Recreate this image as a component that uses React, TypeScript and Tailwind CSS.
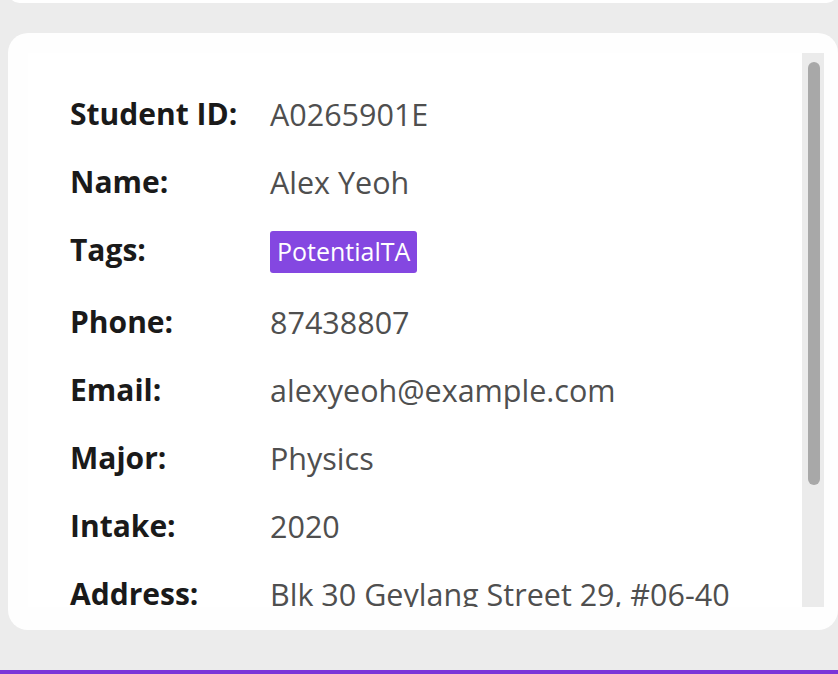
import React from 'react'

const rows: { label: string; value?: string; tag?: string }[] = [
    { label: 'Student ID:', value: 'A0265901E' },
    { label: 'Name:', value: 'Alex Yeoh' },
    { label: 'Tags:', tag: 'PotentialTA' },
    { label: 'Phone:', value: '87438807' },
    { label: 'Email:', value: 'alexyeoh@example.com' },
    { label: 'Major:', value: 'Physics' },
    { label: 'Intake:', value: '2020' },
    { label: 'Address:', value: 'Blk 30 Geylang Street 29, #06-40' },
]

const App = () => {
    return (
        <div className="h-[674px] bg-[#ececec] overflow-hidden flex flex-col font-['Open_Sans',sans-serif]">
            {/* Previous card peeking at top */}
            <div className="h-[23px] -mt-[20px] ml-2 bg-white rounded-[20px] shrink-0"></div>

            {/* Detail card */}
            <div className="mt-[30px] ml-2 w-[830px] h-[597px] bg-[#fefefe] rounded-[20px] pt-5 pl-5 pr-[14px] pb-[23px] flex shrink-0">
                <div className="flex-1 bg-white overflow-hidden pt-[42px] pl-[42px] flex flex-col gap-[30px]">
                    {rows.map((row) => (
                        <div key={row.label} className="flex items-start">
                            <div className="w-[200px] shrink-0 text-[30px] leading-[38px] font-bold text-[#1a1a1a]">
                                {row.label}
                            </div>
                            {row.tag ? (
                                <span className="h-[42px] px-[7px] flex items-center rounded-[3px] bg-[#8447e1] text-white text-[25px]">
                                    {row.tag}
                                </span>
                            ) : (
                                <div className="text-[30.5px] leading-[38px] text-[#4f4f4f] whitespace-nowrap">
                                    {row.value}
                                </div>
                            )}
                        </div>
                    ))}
                </div>

                {/* Scrollbar */}
                <div className="w-[22px] bg-[#ebebeb] shrink-0 pt-[9px] pl-[6px]">
                    <div className="w-[12px] h-[423px] rounded-full bg-[#a8a8a8]"></div>
                </div>
            </div>

            <div className="flex-1"></div>
            <div className="h-1 bg-[#7b35d8] shrink-0"></div>
        </div>
    )
}

export default App
